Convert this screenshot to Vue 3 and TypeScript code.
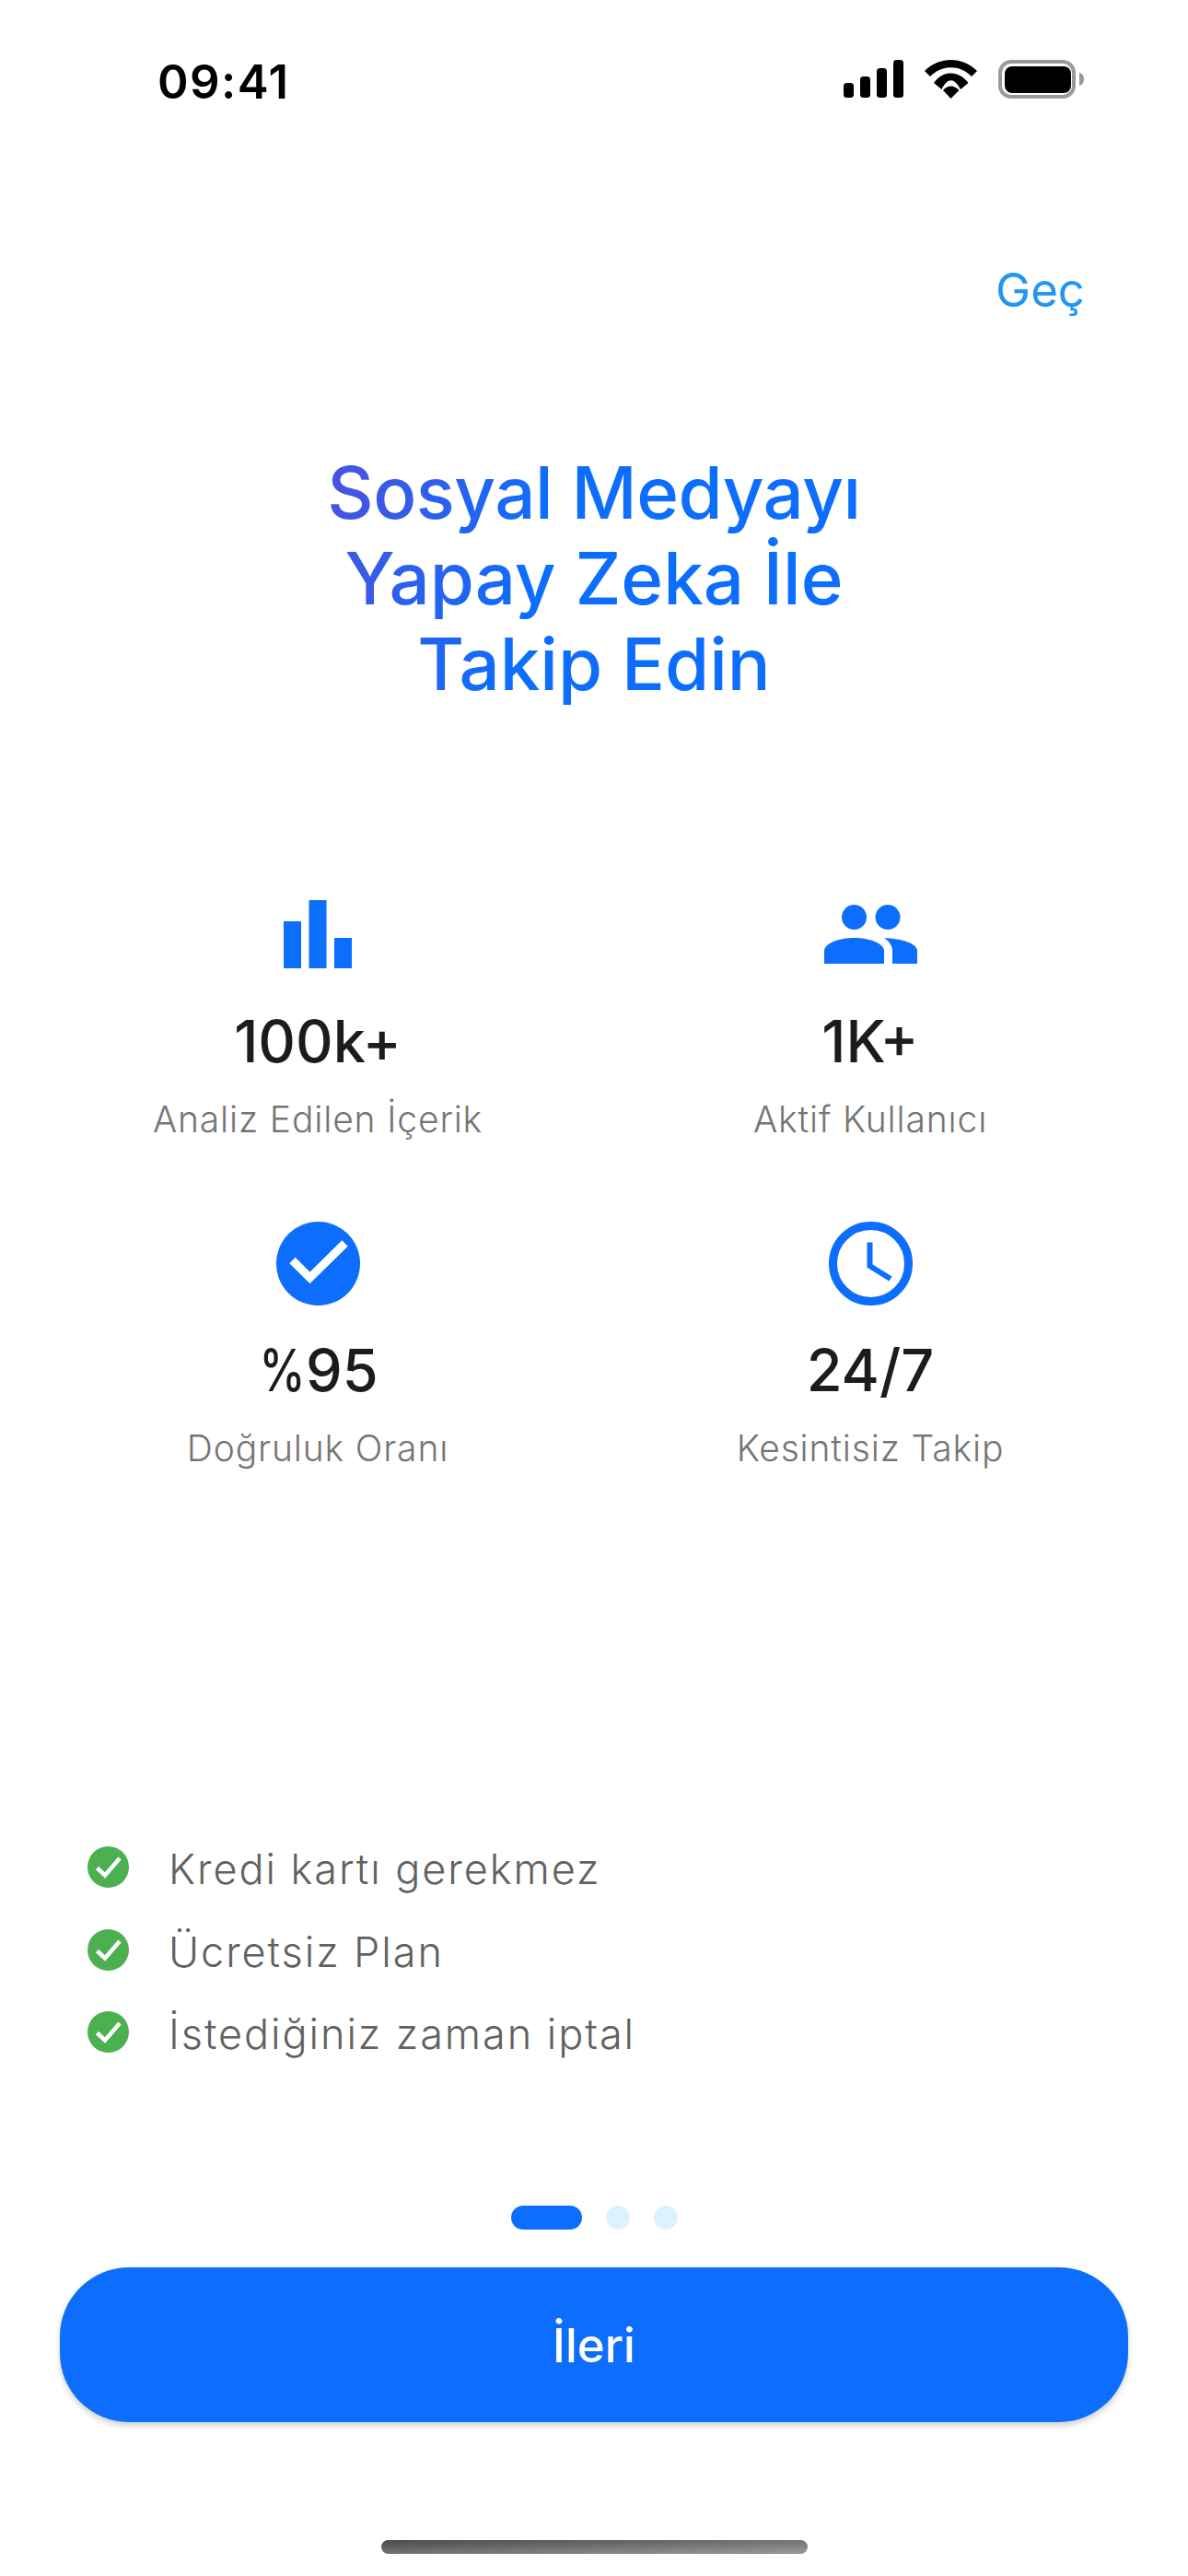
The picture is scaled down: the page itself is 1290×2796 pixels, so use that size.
<script setup lang="ts">
const stats = [
  { icon: "bars", prefix: "", value: "100k+", label: "Analiz Edilen İçerik" },
  { icon: "people", prefix: "", value: "1K+", label: "Aktif Kullanıcı" },
  { icon: "check", prefix: "%", value: "95", label: "Doğruluk Oranı" },
  { icon: "clock", prefix: "", value: "24/7", label: "Kesintisiz Takip" },
];

const perks = ["Kredi kartı gerekmez", "Ücretsiz Plan", "İstediğiniz zaman iptal"];
</script>

<template>
  <div class="screen">
    <div class="status-bar">
      <span class="time">09:41</span>
      <div class="status-icons">
        <svg width="65" height="42" viewBox="0 0 65 42">
          <rect x="0" y="25" width="11" height="16" rx="3.5" />
          <rect x="18" y="18" width="11" height="23" rx="3.5" />
          <rect x="36" y="9" width="11" height="32" rx="3.5" />
          <rect x="54" y="0" width="11" height="41" rx="3.5" />
        </svg>
        <svg width="57" height="42" viewBox="0 0 57 42">
          <path d="M0 12C16-4 41-4 57 12L51 18C38.500 5 18.500 5 6 18Z" />
          <path d="M10 25C20 11 37 11 47.500 25L39 32C32 19 25 19 18.500 32Z" />
          <path d="M20 33C25 27 32 27 37.500 33L28.500 42Z" />
        </svg>
        <svg width="93" height="42" viewBox="0 0 93 42">
          <rect x="2" y="2" width="80" height="38" rx="12" fill="none" stroke="#9a9a9a" stroke-width="4" />
          <rect x="7" y="7" width="72" height="29" rx="8" />
          <path d="M88 14C91 14.500 93 17 93 21C93 25 91 27.500 88 28Z" fill="#9a9a9a" />
        </svg>
      </div>
    </div>

    <div class="skip-row"><span class="skip">Geç</span></div>

    <h1 class="title"><span class="tight">Sosyal Medyayı</span><br />Yapay Zeka İle<br />Takip Edin</h1>

    <div class="stats">
      <div v-for="s in stats" :key="s.value" class="stat">
        <div class="stat-icon">
          <svg v-if="s.icon === 'bars'" width="74" height="74" viewBox="0 0 74 74" fill="#0d6efd">
            <rect x="0" y="23" width="19" height="51" />
            <rect x="27.500" y="0" width="19" height="74" />
            <rect x="55" y="41" width="19" height="33" />
          </svg>
          <svg v-else-if="s.icon === 'people'" width="101" height="64" viewBox="0 0 101 64" fill="#0d6efd">
            <circle cx="32.500" cy="13.500" r="13.500" />
            <circle cx="69" cy="13.500" r="13.500" />
            <path d="M0 64V50C0 42 16 36 32.500 36C49 36 65 42 65 50V64Z" />
            <path d="M65 36C85 37 101 42 101 50V64H74V50C74 45 71 40 65 36Z" />
          </svg>
          <svg v-else-if="s.icon === 'check'" width="91" height="91" viewBox="0 0 91 91">
            <circle cx="45.500" cy="45.500" r="45.500" fill="#0d6efd" />
            <path d="M17.500 42L36.500 61L74.500 23.500" fill="none" stroke="#fff" stroke-width="9" />
          </svg>
          <svg v-else width="91" height="91" viewBox="0 0 91 91" fill="none" stroke="#0d6efd">
            <circle cx="45.500" cy="45.500" r="41" stroke-width="9" />
            <path d="M44.500 22.500V48L67 62" stroke-width="6" />
          </svg>
        </div>
        <div class="stat-value"><span v-if="s.prefix" class="prefix">{{ s.prefix }}</span>{{ s.value }}</div>
        <div class="stat-label">{{ s.label }}</div>
      </div>
    </div>

    <ul class="perks">
      <li v-for="p in perks" :key="p" class="perk">
        <svg width="45" height="45" viewBox="0 0 45 45">
          <circle cx="22.500" cy="22.500" r="22.500" fill="#4caf50" />
          <path d="M10.500 23.500L19 31.500L35 13" fill="none" stroke="#fff" stroke-width="4.500" />
        </svg>
        <span>{{ p }}</span>
      </li>
    </ul>

    <div class="dots">
      <span class="dot active"></span>
      <span class="dot"></span>
      <span class="dot"></span>
    </div>

    <button class="next">İleri</button>

    <div class="home-bar"></div>
  </div>
</template>

<style scoped>
.screen {
  width: 1290px;
  height: 2796px;
  background: #fff;
  font-family: Inter, "Liberation Sans", sans-serif;
  display: flex;
  flex-direction: column;
  overflow: hidden;
}

.status-bar {
  height: 42px;
  margin-top: 65px;
  padding: 0 113px 0 171px;
  display: flex;
  justify-content: space-between;
  align-items: center;
}

.time {
  margin-top: 5px;
  font-size: 51px;
  font-weight: 600;
  letter-spacing: 1.4px;
  color: #000;
  line-height: 42px;
}

.status-icons {
  display: flex;
  align-items: center;
  gap: 23px;
}

.skip-row {
  margin-top: 178px;
  padding-right: 112px;
  display: flex;
  justify-content: flex-end;
}

.skip {
  font-size: 51px;
  line-height: 60px;
  color: #2196f3;
}

.title {
  margin: 143px 0 0;
  align-self: center;
  font-size: 78px;
  line-height: 93px;
  font-weight: 500;
  text-align: center;
  background: linear-gradient(105deg, #4b52dc 0%, #0d6efd 40%);
  -webkit-background-clip: text;
  background-clip: text;
  color: transparent;
}

.tight {
  letter-spacing: -0.5px;
}

.stats {
  margin-top: 201px;
  display: grid;
  grid-template-columns: 600px 600px;
  justify-content: center;
  row-gap: 86px;
}

.stat {
  display: flex;
  flex-direction: column;
  align-items: center;
}

.stat-icon {
  height: 92px;
  display: flex;
  align-items: center;
  justify-content: center;
}

.stat-value {
  margin-top: 30px;
  font-size: 63px;
  line-height: 80px;
  font-weight: 500;
  color: #1c1c1e;
}

.prefix {
  display: inline-block;
  margin-left: -10px;
  transform: scaleX(0.8);
  transform-origin: right center;
}

.stat-label {
  margin-top: 21px;
  font-size: 39px;
  line-height: 48px;
  font-weight: 300;
  letter-spacing: 0.85px;
  color: #757575;
}

.perks {
  list-style: none;
  margin: 408px 0 0;
  padding: 0 0 0 95px;
  display: flex;
  flex-direction: column;
  gap: 44.5px;
}

.perk {
  display: flex;
  align-items: center;
  gap: 43px;
  height: 45px;
  font-size: 45px;
  font-weight: 300;
  line-height: 45px;
  letter-spacing: 1.95px;
  color: #616161;
}

.perk span {
  margin-top: 4px;
}

.dots {
  margin-top: 166px;
  display: flex;
  justify-content: center;
  gap: 26px;
}

.dot {
  width: 26px;
  height: 26px;
  border-radius: 13px;
  background: #dcf3ff;
}

.dot.active {
  width: 77px;
  background: #0d6efd;
}

.next {
  margin: 41px 65px 0;
  height: 168px;
  border: 0;
  border-radius: 75px;
  background: #0d6efd;
  color: #fff;
  font-family: inherit;
  font-size: 51px;
  font-weight: 500;
  box-shadow: 0 4px 6px rgba(0, 0, 0, 0.18);
}

.home-bar {
  margin: 128px auto 0;
  width: 463px;
  height: 15px;
  border-radius: 8px;
  background: linear-gradient(to bottom right, #4a4a4a, #9a9a9a);
}
</style>

<style>
body {
  background: #fff;
}
</style>
